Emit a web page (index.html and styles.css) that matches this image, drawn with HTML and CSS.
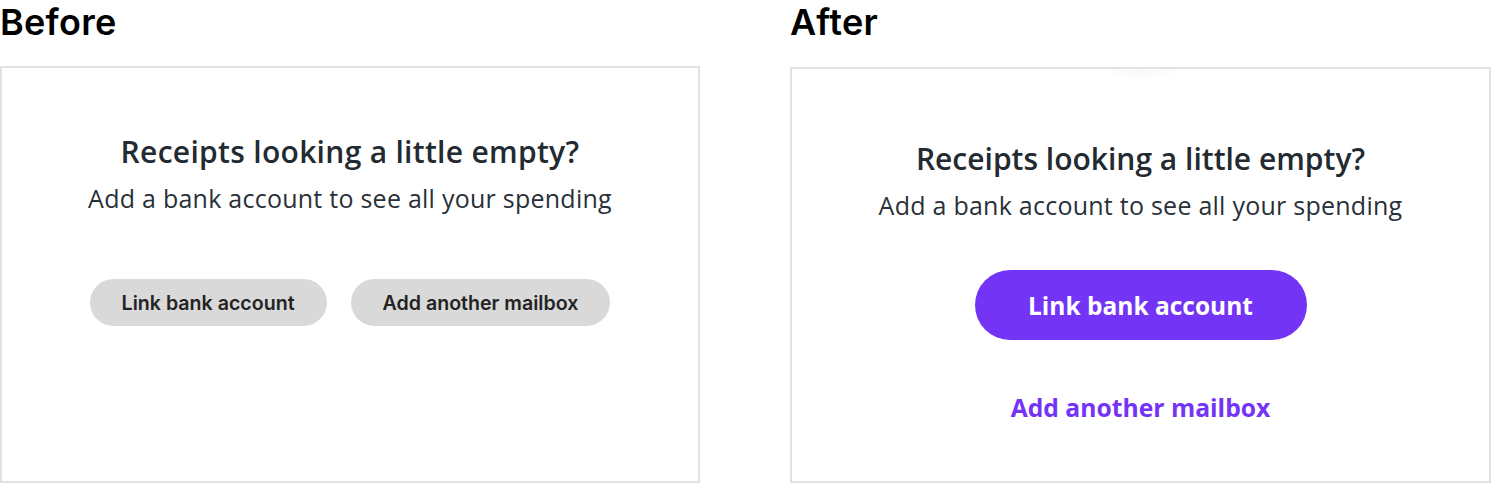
FILE: index.html
```html
<!DOCTYPE html>
<html lang="en">
<head>
<meta charset="utf-8">
<title>Before / After</title>
<link rel="stylesheet" href="styles.css">
</head>
<body>
<main class="compare">
  <section class="panel panel--before">
    <h2 class="panel-title">Before</h2>
    <div class="card card--before">
      <h3 class="card-title">Receipts looking a little empty?</h3>
      <p class="card-text">Add a bank account to see all your spending</p>
      <div class="actions actions--row">
        <button class="btn btn--grey">Link bank account</button>
        <button class="btn btn--grey">Add another mailbox</button>
      </div>
    </div>
  </section>
  <section class="panel panel--after">
    <h2 class="panel-title">After</h2>
    <div class="card card--after">
      <h3 class="card-title">Receipts looking a little empty?</h3>
      <p class="card-text">Add a bank account to see all your spending</p>
      <div class="actions actions--column">
        <button class="btn btn--primary">Link bank account</button>
        <button class="btn btn--link">Add another mailbox</button>
      </div>
    </div>
  </section>
</main>
</body>
</html>
```
FILE: styles.css
```css
* { box-sizing: border-box; }
html, body { margin: 0; padding: 0; background: #fff; }
body { font-family: "Open Sans", "Noto Sans", sans-serif; color: #232a31; }

.compare {
  display: grid;
  grid-template-columns: 700px 701px;
  column-gap: 90px;
}

.panel { display: flex; flex-direction: column; }

.panel-title {
  margin: 0;
  font-family: Inter, "Liberation Sans", sans-serif;
  font-weight: 600;
  font-size: 36px;
  line-height: 44px;
  height: 44px;
  color: #000;
  letter-spacing: 0.3px;
}

.card {
  border: 2px solid #e2e2e2;
  height: 417px;
  display: flex;
  flex-direction: column;
  align-items: center;
  position: relative;
}
.card--before { margin-top: 22px; padding-top: 66px; }
.card--after { margin-top: 23px; padding-top: 72px; height: 416px; }

.card--after::before {
  content: "";
  position: absolute;
  top: 0;
  left: 305px;
  width: 90px;
  height: 12px;
  background: radial-gradient(ellipse at 50% 0%, rgba(0,0,0,0.028), rgba(0,0,0,0) 70%);
}

.card-title {
  margin: 0;
  font-weight: 600;
  font-size: 30px;
  line-height: 36px;
  color: #232a31;
}
.card--before .card-title { letter-spacing: 0.3px; }
.card--after .card-title { letter-spacing: 0; }

.card-text {
  margin: 12px 0 0;
  font-weight: 400;
  font-size: 25px;
  line-height: 32px;
  letter-spacing: 0.25px;
  color: #2a3038;
}

.actions { display: flex; align-items: center; }
.actions--row { margin-top: 65px; gap: 24px; }
.actions--column { flex-direction: column; margin-top: 49px; gap: 52px; }

.btn {
  border: 0;
  cursor: pointer;
  background: none;
  padding: 0;
}

.btn--grey {
  height: 47px;
  padding: 0 32px;
  border-radius: 24px;
  background: #d9d9d9;
  color: #232323;
  font-family: Inter, "Liberation Sans", sans-serif;
  font-weight: 600;
  font-size: 19.6px;
}

.btn--primary {
  width: 332px;
  height: 70px;
  border-radius: 35px;
  background: #7434f6;
  color: #fff;
  font-family: "Open Sans", sans-serif;
  font-weight: 700;
  font-size: 24.5px;
}

.btn--link {
  color: #7434f6;
  font-family: "Open Sans", sans-serif;
  font-weight: 700;
  font-size: 24.7px;
  line-height: 32px;
}
```
